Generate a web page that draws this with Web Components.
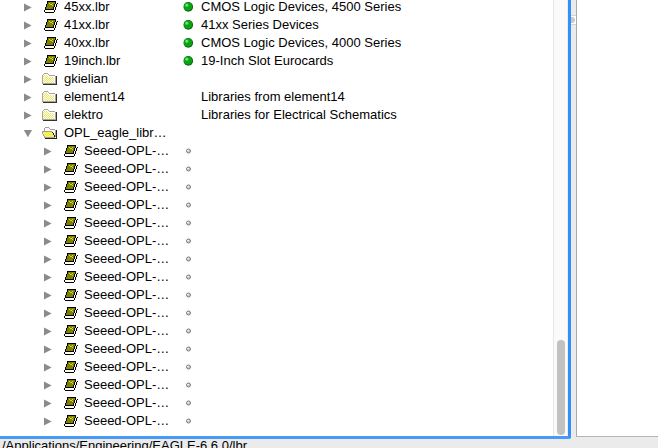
<!DOCTYPE html>
<html lang="en"><head><meta charset="utf-8"><title>Libraries</title>
<style>html,body{margin:0;width:658px;height:448px;overflow:hidden;background:#ebebeb}</style></head>
<body><library-window></library-window>
<script>
const ICONS = {
 book: `<svg width="16" height="16" shape-rendering="crispEdges"><path d="M4 2H13V5H12V8H11V11H2V8H3V5H4Z" fill="#808000"/><path d="M4 2H13V3H4ZM4 3H5V5H4ZM3 5H4V8H3ZM2 8H3V11H2ZM12 3H13V5H12ZM11 5H12V8H11ZM10 8H11V10H10ZM2 10H11V11H2ZM1 11H2V13H1ZM2 13H11V14H2ZM11 11H12V13H11ZM12 8H13V11H12ZM13 5H14V8H13ZM14 4H15V5H14Z" fill="#000"/><path d="M2 11H11V13H2ZM11 8H12V11H11ZM12 5H13V8H12Z" fill="#fff"/><path d="M6 4h1v1H6zM9 4h1v1H9zM7 5h2v1H7zM9 6h1v1H9z" fill="#d8d82a"/></svg>`,
 folder: `<svg width="16" height="16" shape-rendering="crispEdges"><path d="M0 4H1V3H7V5H13V13H0Z" fill="#fffff0"/><path d="M2 4.5H6M2 6.5H12M2 8.5H12M2 10.5H12" stroke="#f2e868" stroke-dasharray="1 1"/><path d="M1 5.5H7M1 7.5H13M1 9.5H13M1 11.5H13" stroke="#f2e868" stroke-dasharray="1 1"/><path d="M0 4H1V13H0ZM1 3H2V4H1ZM2 2H6V3H2ZM6 3H7V4H6ZM7 4H13V5H7ZM13 5H14V13H13ZM0 12H13V13H0Z" fill="#a5a5a5"/><path d="M14 5H15V14H1V13H14Z" fill="#333"/></svg>`,
 open: `<svg width="16" height="16" shape-rendering="crispEdges"><path d="M2 3H7V4H13V12H3Z" fill="#fffff0"/><path d="M1 7H10L13 12H3Z" fill="#f6ee55"/><path d="M2 3H3V6H2ZM3 2H7V3H3ZM7 3H8V4H7ZM8 4H13V5H8ZM0 6H10V7H0ZM0 7H1V9H0ZM1 9H2V11H1ZM2 11H3V13H2ZM3 12H13V13H3ZM13 5H14V12H13Z" fill="#a0a0a0"/><path d="M14 5H15V14H3V13H14ZM10 7H11V8H10ZM11 8H12V10H11ZM12 10H13V12H12Z" fill="#222"/></svg>`
};
class TreeIcon extends HTMLElement{connectedCallback(){this.attachShadow({mode:'open'}).innerHTML=`<style>:host{display:block;width:16px;height:16px}svg{display:block}</style>${ICONS[this.getAttribute('kind')]}`}}
customElements.define('tree-icon',TreeIcon);
class StatusDot extends HTMLElement{connectedCallback(){const on=this.hasAttribute('on');this.attachShadow({mode:'open'}).innerHTML=`<style>:host{display:flex;width:13px;height:14px;align-items:center;justify-content:center}svg{display:block}</style>`+(on?`<svg width="11" height="10"><circle cx="5.3" cy="4.9" r="4.8" fill="#086b0c"/><circle cx="5" cy="4.5" r="4.1" fill="#09a315"/><circle cx="3.8" cy="3.3" r="1.7" fill="#42d64d"/><path d="M3 2.5h1.5v1H3z" fill="#baf5bc"/></svg>`:`<svg width="5" height="6"><circle cx="2.5" cy="3" r="2" fill="#ccc" stroke="#7c7c7c"/><path d="M1 2h2v1H1z" fill="#eee"/></svg>`)}}
customElements.define('status-dot',StatusDot);
class TreeRow extends HTMLElement{connectedCallback(){
 const k=this.getAttribute('kind'),child=this.hasAttribute('child'),s=this.getAttribute('status');
 this.attachShadow({mode:'open'}).innerHTML=`<style>
 :host{display:grid;grid-template-columns:182px 19px 1fr;height:18px;line-height:18px;white-space:pre}
 .name{display:flex;padding-left:${child?43:23}px}.arrow{display:block;width:9px;height:18px;margin-right:${k==='book'?11:10}px;flex:none}
 tree-icon{margin:1px ${k==='book'?5:6}px 0 0;flex:none}.name span{width:103px}status-dot{margin-top:2px}
 slot{display:inline}</style>
 <div class="name"><svg class="arrow" width="9" height="18"><path d="${k==='open'?'M.8 6H9L4.9 13.3Z':'M1 5.5L8.6 9.5L1 13.5Z'}" fill="#8b8b8b"/></svg><tree-icon kind="${k}"></tree-icon><span><slot></slot></span></div><div>${s?`<status-dot ${s==='on'?'on':''}></status-dot>`:''}</div><div><slot name="description"></slot></div>`}}
customElements.define('tree-row',TreeRow);
class LibraryTree extends HTMLElement{connectedCallback(){
 const rows=[['45xx.lbr','book','on','CMOS Logic Devices, 4500 Series'],['41xx.lbr','book','on','41xx Series Devices'],['40xx.lbr','book','on','CMOS Logic Devices, 4000 Series'],['19inch.lbr','book','on','19-Inch Slot Eurocards'],['gkielian','folder','',''],['element14','folder','','Libraries from element14'],['elektro','folder','','Libraries for Electrical Schematics'],['OPL_eagle_libr…','open','','']];
 for(let i=0;i<16;i++)rows.push(['Seeed-OPL-…','book','off','',true]);
 this.attachShadow({mode:'open'}).innerHTML=`<style>:host{display:block;height:436px;overflow:hidden;background:#fff;color:#000;font:13px "Liberation Sans",Arial,sans-serif}.rows{margin-top:-2px}</style><div class="rows">${rows.map(r=>`<tree-row kind="${r[1]}" status="${r[2]}" ${r[4]?'child':''}>${r[0]}${r[3]?`<span slot="description">${r[3]}</span>`:''}</tree-row>`).join('')}</div>`}}
customElements.define('library-tree',LibraryTree);
class ScrollTrack extends HTMLElement{connectedCallback(){this.attachShadow({mode:'open'}).innerHTML=`<style>:host{display:flex;box-sizing:border-box;width:15px;height:436px;background:#fafafa;border-left:1px solid #e7e7e7;border-right:1px solid #ededed;padding:340px 0 1px 3px;align-items:stretch}i{width:8px;border-radius:4px;background:#c1c1c1}</style><i></i>`}}
customElements.define('scroll-track',ScrollTrack);
class PaneSplitter extends HTMLElement{connectedCallback(){this.attachShadow({mode:'open'}).innerHTML=`<style>:host{display:block;box-sizing:border-box;width:5px;height:439px;padding-top:15px;background:#ebebeb}svg{display:block}</style><svg width="5" height="10"><path d="M0 0H5V10H0Z" fill="#fff"/><path d="M0 .5H5M0 9.5H5" stroke="#d5d5d5"/><circle cx="1" cy="5" r="3" fill="#c8c8c8"/></svg>`}}
customElements.define('pane-splitter',PaneSplitter);
class LibraryWindow extends HTMLElement{connectedCallback(){this.attachShadow({mode:'open'}).innerHTML=`<style>
 :host{display:block;width:658px;height:448px;overflow:hidden;background:#ebebeb}.main{display:flex;height:439px}
 .list{display:flex;width:568px;height:436px;border-right:3px solid #338ffa;border-bottom:3px solid #479bf8;border-bottom-right-radius:2px}
 library-tree{width:553px}.preview{box-sizing:border-box;width:82px;height:437px;background:#fff;border-left:1px solid #aaa;border-bottom:1px solid #b5b5b5}
 .path{padding-left:2px;height:9px;font:13px/13px "Liberation Sans",Arial,sans-serif;white-space:pre;overflow:hidden}
 </style><div class="main"><div class="list"><library-tree></library-tree><scroll-track></scroll-track></div><pane-splitter></pane-splitter><div class="preview"></div></div><div class="path">/Applications/Engineering/EAGLE-6.6.0/lbr</div>`}}
customElements.define('library-window',LibraryWindow);
</script></body></html>
